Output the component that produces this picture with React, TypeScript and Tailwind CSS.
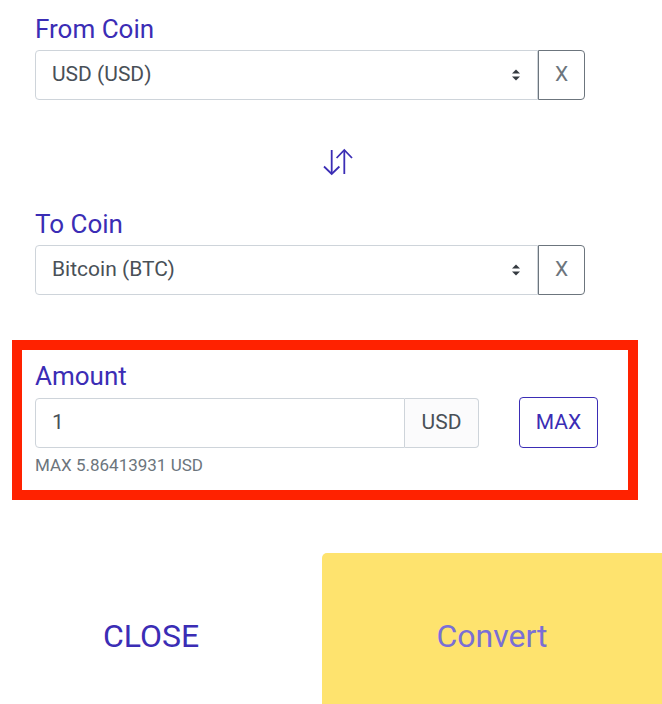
import React from 'react';

const font = { fontFamily: 'Roboto, "Liberation Sans", sans-serif' };

function SelectArrows() {
  return (
    <svg width="10" height="14" viewBox="0 0 10 14" className="text-[#343a40]">
      <path d="M1 5.5 L5 1.5 L9 5.5 Z" fill="currentColor" />
      <path d="M1 8.5 L5 12.5 L9 8.5 Z" fill="currentColor" />
    </svg>
  );
}

function SwapIcon() {
  return (
    <svg width="34" height="28" viewBox="0 0 34 28" fill="none" stroke="#3b2db5" strokeWidth="1.8">
      <line x1="10.7" y1="2" x2="10.7" y2="26" />
      <polyline points="3,18.5 10.7,26 18.4,18.5" />
      <line x1="23.3" y1="2" x2="23.3" y2="26" />
      <polyline points="15.6,10 23.3,2 31,10" />
    </svg>
  );
}

function CoinSelect({ label, value }: { label: string; value: string }) {
  return (
    <div className="pl-[35px]">
      <div className="text-[26px] leading-[30px] text-[#3b2db5] mb-[6px]">{label}</div>
      <div className="flex w-[550px] h-[50px]">
        <div className="flex-1 flex items-center justify-between border border-[#ced4da] rounded-l-[4px] pl-[16px] pr-[16px] text-[21px] text-[#495057]">
          <span>{value}</span>
          <SelectArrows />
        </div>
        <button className="w-[47px] border border-[#6c757d] rounded-r-[4px] text-[21px] text-[#6c757d]">X</button>
      </div>
    </div>
  );
}

export default function App() {
  return (
    <div className="w-[662px] h-[704px] overflow-hidden bg-white" style={font}>
      <div className="pt-[14px]">
        <CoinSelect label="From Coin" value="USD (USD)" />
        <div className="h-[109px] flex items-start justify-center pt-[48px]">
          <div className="ml-[14px]">
            <SwapIcon />
          </div>
        </div>
        <CoinSelect label="To Coin" value="Bitcoin (BTC)" />
      </div>

      <div className="mt-[45px] ml-[12px] w-[626px] h-[160px] border-[10px] border-[#ff2200] pl-[13px] pt-[11px]">
        <div className="text-[26px] leading-[30px] text-[#3b2db5] mb-[6px]">Amount</div>
        <div className="flex items-center">
          <div className="flex w-[444px] h-[50px]">
            <div className="flex-1 flex items-center border border-[#ced4da] rounded-l-[4px] pl-[16px] text-[21px] text-[#495057]">1</div>
            <div className="w-[74px] flex items-center justify-center border border-l-0 border-[#ced4da] rounded-r-[4px] bg-[#fbfbfc] text-[21px] text-[#495057]">USD</div>
          </div>
          <button className="ml-[40px] w-[79px] h-[51px] border border-[#3b2db5] rounded-[4px] text-[21px] text-[#3b2db5]">MAX</button>
        </div>
        <div className="mt-[7px] text-[17px] leading-[20px] text-[#6c757d]">MAX 5.86413931 USD</div>
      </div>

      <div className="mt-[53px] flex">
        <button className="w-[302px] h-[166px] text-[32px] text-[#3b2db5] uppercase">Close</button>
        <button className="ml-[20px] flex-1 h-[166px] bg-[#fee36e] rounded-tl-[5px] text-[32px] text-[#7a6fd6]">Convert</button>
      </div>
    </div>
  );
}
